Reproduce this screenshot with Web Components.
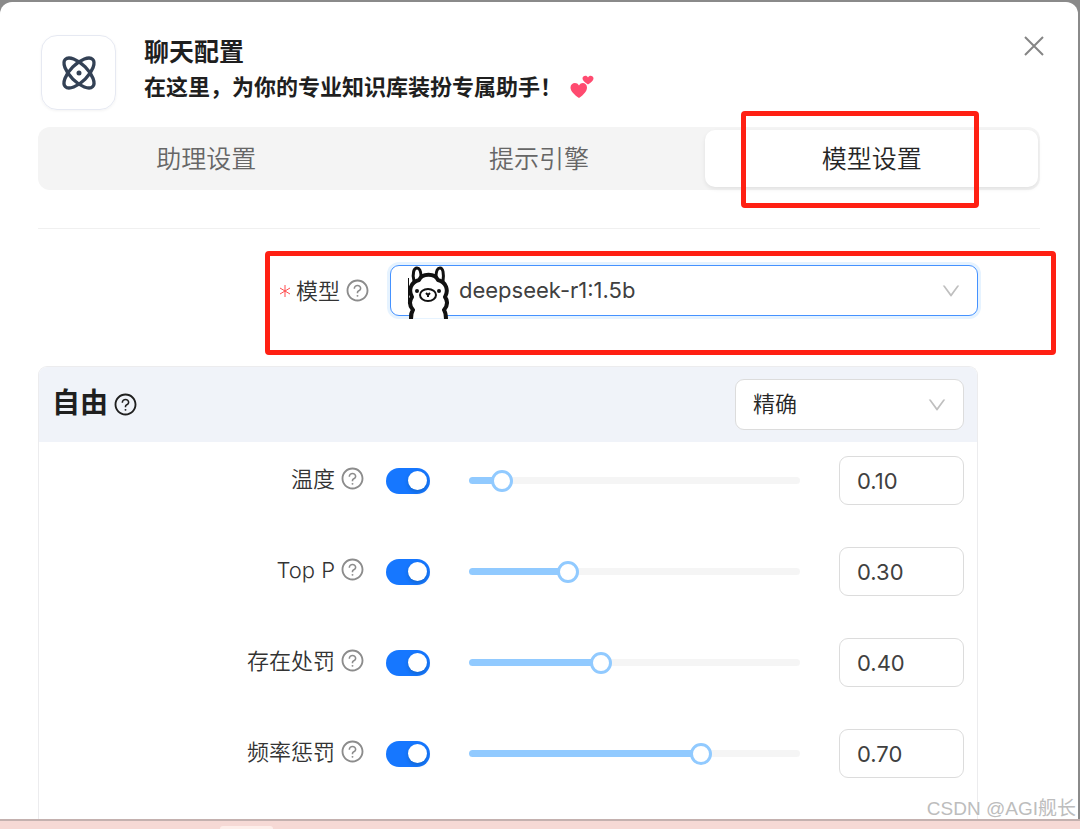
<!DOCTYPE html>
<html lang="zh-CN">
<head>
<meta charset="utf-8">
<meta name="viewport" content="width=device-width, initial-scale=1">
<title>聊天配置</title>
<style>
  body { margin: 0; background: #8a8a8a; font-family: Inter, "Noto Sans CJK SC", sans-serif; font-size: 22px; line-height: 32px; color: #333; }
</style>
</head>
<body>
<chat-settings></chat-settings>
<script>
const define = (name, html, setup) => customElements.define(name, class extends HTMLElement {
  connectedCallback() {
    if (this.shadowRoot) return;
    const t = document.createElement('template');
    t.innerHTML = html;
    this.attachShadow({ mode: 'open' }).append(t.content.cloneNode(true));
    if (setup) setup(this, this.shadowRoot);
  }
});

define('help-icon', `
<style>
  :host { display: inline-flex; width: 25px; height: 25px; color: #8c8c8c; }
  svg { width: 100%; height: 100%; fill: currentColor; }
</style>
<svg viewBox="0 0 1024 1024" role="img" aria-label="帮助"><path d="M512 64C264.6 64 64 264.6 64 512s200.6 448 448 448 448-200.6 448-448S759.4 64 512 64zm0 820c-205.4 0-372-166.6-372-372s166.6-372 372-372 372 166.6 372 372-166.6 372-372 372z"/><path d="M623.6 316.7C593.6 290.4 554 276 512 276s-81.6 14.5-111.6 40.7C369.2 344 352 380.7 352 420v7.6c0 4.4 3.6 8 8 8h48c4.4 0 8-3.6 8-8V420c0-44.1 43.1-80 96-80s96 35.9 96 80c0 31.1-22 59.6-56.1 72.7-21.2 8.1-39.2 22.3-52.1 40.9-13.1 19-19.9 41.8-19.9 64.9V620c0 4.4 3.6 8 8 8h48c4.4 0 8-3.6 8-8v-22.7a48.3 48.3 0 0130.9-44.8c59-22.7 97.1-74.7 97.1-132.5.1-39.3-17.1-76-48.3-103.3zM472 732a40 40 0 1080 0 40 40 0 10-80 0z"/></svg>`);

define('down-arrow', `
<style>
  :host { display: block; width: 22px; height: 22px; color: #bfbfbf; pointer-events: none; }
  svg { display: block; width: 100%; height: 100%; fill: currentColor; }
</style>
<svg viewBox="0 0 1024 1024" aria-hidden="true"><path d="M884 256h-75c-5.1 0-9.9 2.5-12.9 6.6L512 654.2 227.9 262.6c-3-4.1-7.8-6.6-12.9-6.6h-75c-6.5 0-10.3 7.4-6.5 12.7l352.6 486.1c12.8 17.6 39 17.6 51.7 0l352.6-486.1c3.9-5.3.1-12.7-6.4-12.7z"/></svg>`);

define('marker-box', `
<style>
  :host { position: absolute; box-sizing: border-box; border: 5px solid #ff2013; border-radius: 4px; pointer-events: none; z-index: 2; }
</style>`);

define('dialog-header', `
<style>
  :host { display: flex; align-items: flex-start; gap: 28px; padding: 0 0 0 3px; }
  .logo { display: grid; place-items: center; box-sizing: border-box; width: 75px; height: 75px; border: 1px solid #e6e9f2; border-radius: 16px; box-shadow: 0 1px 3px #0000000d; }
  .text { flex: 1; color: #1f1f1f; font-weight: 700; }
  h1 { margin: 0; font-size: 25px; line-height: 35px; }
  p { display: flex; align-items: center; gap: 8px; margin: 0; font-size: 22px; line-height: 34px; }
  button { display: grid; place-items: center; width: 32px; height: 32px; margin: -5px -10px 0 0; padding: 0; border: 0; background: none; color: #858585; }
</style>
<div class="logo">
  <svg width="40" height="40" viewBox="0 0 24 24" fill="none" stroke="#334155" stroke-width="2" stroke-linecap="round" stroke-linejoin="round" aria-hidden="true">
    <circle cx="12" cy="12" r="1" fill="#334155" stroke-width="1"/>
    <path d="M20.2 20.2c2.04-2.03.02-7.36-4.5-11.9-4.54-4.52-9.87-6.54-11.9-4.5-2.04 2.03-.02 7.36 4.5 11.9 4.54 4.52 9.87 6.54 11.9 4.5Z"/>
    <path d="M15.7 15.7c4.52-4.54 6.54-9.87 4.5-11.9-2.03-2.04-7.36-.02-11.9 4.5-4.52 4.54-6.54 9.87-4.5 11.9 2.03 2.04 7.36.02 11.9-4.5Z"/>
  </svg>
</div>
<div class="text">
  <h1>聊天配置</h1>
  <p>在这里，为你的专业知识库装扮专属助手！
    <svg width="24" height="24" viewBox="0 0 24 24" fill="#ff4b70" role="img" aria-label="双心"><path d="M9 23C4 19.500 .5 16 .5 12.500C.5 7.500 7 6.500 9 10.500C11 6.500 17 7.500 17 12.500C17 16 14 19.500 9 23Z"/><path d="M18 9.500C15 7.500 12.500 5.500 12.500 3.500C12.500 .5 16.800 -.2 18 2.400C19.200 -.2 23.500 .5 23.500 3.500C23.500 5.500 21 7.500 18 9.500Z"/></svg>
  </p>
</div>
<button type="button" aria-label="关闭"><svg width="20" height="20" viewBox="0 0 20 20" fill="none" stroke="currentColor" stroke-width="2" aria-hidden="true"><path d="M1 1L19 19M19 1L1 19"/></svg></button>`);

define('tab-bar', `
<style>
  :host { display: grid; grid-template-columns: repeat(3, 1fr); box-sizing: border-box; padding: 3px 2px; border-radius: 12px; background: #f4f4f4; }
  .tab { position: relative; display: grid; }
  button { height: 57px; padding: 0; border: 0; border-radius: 10px; background: none; font: inherit; font-size: 25px; font-weight: 350; color: #666; }
  button[aria-selected=true] { background: #fff; color: #262626; box-shadow: 0 2px 4px #00000014; }
  marker-box { inset: -19px 59px -21px 36px; }
</style>
<div class="tab"><button type="button" role="tab" aria-selected="false">助理设置</button></div>
<div class="tab"><button type="button" role="tab" aria-selected="false">提示引擎</button></div>
<div class="tab"><button type="button" role="tab" aria-selected="true">模型设置</button><marker-box></marker-box></div>`);

define('model-field', `
<style>
  :host { position: relative; display: grid; grid-template-columns: 352fr 588fr; align-items: center; }
  .label { display: flex; justify-content: flex-end; align-items: center; gap: 5px; padding-right: 20px; font-weight: 350; }
  .star { color: #ff4d4f; }
  .star svg { display: block; }
  .box { position: relative; display: grid; }
  select { appearance: none; box-sizing: border-box; width: 100%; height: 51px; padding: 0 48px 2px 68px; border: 1px solid #4592ff; border-radius: 9px; background: #fff; box-shadow: 0 0 0 3px #e6f3ff; font: inherit; color: #404040; outline: 0; }
  down-arrow { position: absolute; right: 16px; top: 15px; }
  .llama { position: absolute; left: 17px; top: 0; pointer-events: none; }
  marker-box { inset: -14px -78px -39px 227px; }
</style>
<div class="label"><span class="star"><svg width="12" height="12" viewBox="0 0 12 12" stroke="currentColor" stroke-width="1" aria-hidden="true"><path d="M6 0V12M1 3L11 9M11 3L1 9"/></svg></span><label for="model">模型</label><help-icon></help-icon></div>
<div class="box">
  <select id="model"><option>deepseek-r1:1.5b</option></select>
  <svg class="llama" width="44" height="54" viewBox="0 0 44 54" fill="#fff" stroke="#111" stroke-width="4" stroke-linecap="butt" stroke-linejoin="round" aria-hidden="true">
    <path stroke="none" d="M5 53V14L14 8H30L40 14V53Z"/>
    <path fill="none" stroke-width="1" d="M1.500 13V39"/>
    <path stroke-width="3" d="M7 16C5 8 7 3 10 3C13 3 14 8 14 12M29 12C29 8 30 3 33 3C36 3 37 8 36 16"/>
    <path fill="none" d="M4 54C4 49 4 48 6 45C2 40 2 36 5 32C1 25 4 17 12 15C15 8 28 8 31 15C39 17 42 25 38 32C41 36 41 40 37 45C39 48 39 50 39 54"/>
    <ellipse cx="21" cy="30" rx="8" ry="6" stroke-width="2"/>
    <path fill="none" stroke-width="2" d="M19 28L21 30L23 28M21 29V32"/>
    <circle cx="10" cy="26" r="2" fill="#111" stroke="none"/><circle cx="32" cy="26" r="2" fill="#111" stroke="none"/>
  </svg>
  <down-arrow></down-arrow>
</div>
<marker-box></marker-box>`);

define('param-row', `
<style>
  :host { display: grid; grid-template-columns: 334fr 578fr; align-items: center; }
  .label { display: flex; justify-content: flex-end; align-items: center; gap: 5px; padding: 0 21px 4px 0; font-weight: 350; }
  .controls { display: flex; align-items: center; gap: 39px; }
  input { margin: 0; }
  .switch { appearance: none; flex: none; display: flex; justify-content: flex-end; align-items: center; box-sizing: border-box; width: 44px; height: 26px; padding: 3px; border-radius: 13px; background: #1677ff; }
  .switch::before { content: ""; width: 19px; height: 19px; border-radius: 50%; background: #fff; box-shadow: 0 2px 4px #00230b33; }
  .track { flex: 1; min-width: 0; height: 7px; display: flex; align-items: center; border-radius: 4px; background: linear-gradient(90deg, #91caff var(--pct), #f5f5f5 var(--pct)); }
  .range { appearance: none; flex: 1; min-width: 0; height: 23px; margin: 0 -11px; background: none; }
  .range::-webkit-slider-thumb { appearance: none; box-sizing: border-box; width: 22px; height: 22px; border: 3px solid #91caff; border-radius: 50%; background: #fff; }
  .number { box-sizing: border-box; width: 125px; height: 49px; padding: 0 17px; border: 1px solid #dcdcdc; border-radius: 9px; background: #fff; font: inherit; color: #404040; }
</style>
<div class="label"><label for="on"><slot></slot></label><help-icon></help-icon></div>
<div class="controls">
  <input id="on" class="switch" type="checkbox" role="switch" checked>
  <div class="track"><input class="range" type="range" min="0" max="1" step="0.01"></div>
  <input class="number" type="text" inputmode="decimal">
</div>`, (host, root) => {
  const value = host.getAttribute('value'), range = root.querySelector('.range'), number = root.querySelector('.number');
  const name = host.textContent;
  range.setAttribute('aria-label', name);
  number.setAttribute('aria-label', name);
  const paint = () => root.querySelector('.track').style.setProperty('--pct', range.value * 100 + '%');
  range.value = value;
  number.value = value;
  paint();
  range.addEventListener('input', () => { number.value = Number(range.value).toFixed(2); paint(); });
  number.addEventListener('change', () => { range.value = number.value; paint(); });
});

define('freedom-panel', `
<style>
  :host { display: flex; flex-direction: column; box-sizing: border-box; border: 1px solid #ececee; border-bottom: 0; border-radius: 9px 9px 0 0; }
  header { display: flex; justify-content: space-between; align-items: center; height: 75px; box-sizing: border-box; padding: 0 13px; background: #f0f3f9; border-radius: 8px 8px 0 0; }
  .title { display: flex; align-items: center; gap: 5px; }
  label { padding-bottom: 4px; font-size: 28px; font-weight: 700; color: #1f1f1f; }
  .title help-icon { color: #1f1f1f; }
  .box { position: relative; width: 229px; }
  select { appearance: none; display: block; box-sizing: border-box; width: 100%; height: 51px; padding: 0 44px 2px 17px; border: 1px solid #dcdcdc; border-radius: 9px; background: #fff; font: inherit; font-weight: 350; color: #262626; }
  down-arrow { position: absolute; right: 16px; top: 15px; }
  .rows { display: flex; flex-direction: column; gap: 42px; padding: 14px 13px 40px; }
</style>
<header>
  <div class="title"><label for="preset">自由</label><help-icon></help-icon></div>
  <div class="box"><select id="preset"><option>精确</option></select><down-arrow></down-arrow></div>
</header>
<div class="rows">
  <param-row value="0.10">温度</param-row>
  <param-row value="0.30">Top P</param-row>
  <param-row value="0.40">存在处罚</param-row>
  <param-row value="0.70">频率惩罚</param-row>
</div>`);

define('chat-settings', `
<style>
  :host { position: relative; display: flex; flex-direction: column; min-height: 100vh; overflow: hidden; }
  main { flex: 1; box-sizing: border-box; margin: 2px 2px 0 0; padding: 33px 38px 0; border-radius: 12px 12px 0 0; background: #fff; display: flex; flex-direction: column; }
  tab-bar { margin-top: 17px; }
  hr { width: 100%; height: 1px; margin: 38px 0 36px; border: 0; background: #f0f0f0; }
  form { flex: 1; display: flex; flex-direction: column; margin-right: 62px; }
  freedom-panel { flex: 1; margin-top: 50px; }
  footer { display: flex; box-sizing: border-box; height: 10px; padding: 5px 0 0 220px; border-top: 2px solid #c4b1af; background: #f6d9d5; }
  .tab { width: 53px; border-radius: 5px 5px 0 0; background: #fdeeea; }
  .mark { position: absolute; right: 4px; bottom: 6px; font-size: 19px; line-height: 28px; font-family: "Liberation Sans", "Noto Sans CJK SC", sans-serif; color: #bdbdbd; text-shadow: 1px 1px 0 #fff; }
</style>
<main>
  <dialog-header></dialog-header>
  <tab-bar role="tablist"></tab-bar>
  <hr>
  <form><model-field></model-field><freedom-panel></freedom-panel></form>
</main>
<footer><div class="tab"></div></footer>
<div class="mark">CSDN @AGI舰长</div>`);
</script>
</body>
</html>
